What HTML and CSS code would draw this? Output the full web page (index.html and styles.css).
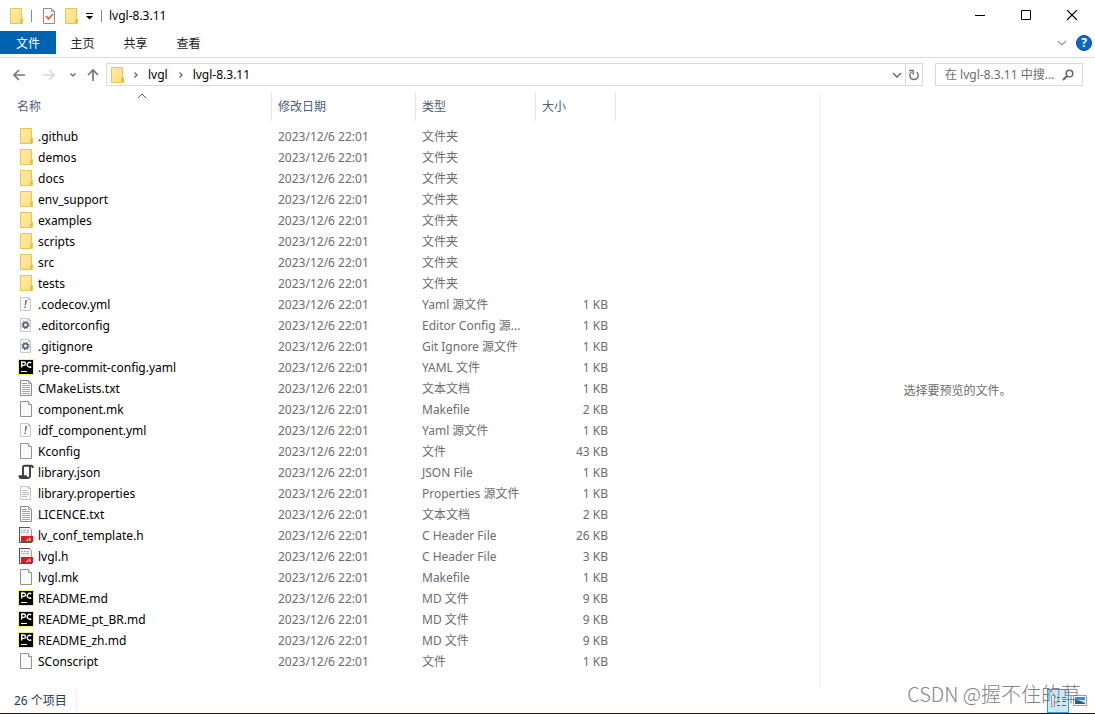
FILE: index.html
```html
<!DOCTYPE html>
<html lang="zh-CN">
<head>
<meta charset="utf-8">
<title>lvgl-8.3.11</title>
<link rel="stylesheet" href="styles.css">
</head>
<body>
<svg class="sprite" aria-hidden="true">
  <defs>
    <linearGradient id="folder-fill" x1="0" y1="0" x2="1" y2="1"><stop offset="0" stop-color="#ffeaa5"/><stop offset="1" stop-color="#ffdf80"/></linearGradient>
  </defs>
  <symbol id="folder" viewBox="0 0 16 16"><path d="M2.5.5h11v10h1v5h-12z" fill="url(#folder-fill)" stroke="#eac54f"/><path d="M12.500 15.500v-4l1-1v5" fill="#ffe69a" stroke="#e6c04a"/></symbol>
  <symbol id="blank" viewBox="0 0 16 16"><path d="M2.500.5h8l3 3v12h-11z" fill="#f9fafa" stroke="#939393"/><path d="M10.500.5v3h3" fill="#fff" stroke="#939393"/></symbol>
  <symbol id="text" viewBox="0 0 16 16"><path d="M2.500.5h8l3 3v12h-11z" fill="#fff" stroke="#8a8a8a"/><path d="M10.500.5v3h3M4 3.500h5M4 5.500h8M4 7.500h8M4 9.500h8M4 11.500h8M4 13.500h8" fill="none" stroke="#a2a2a2"/></symbol>
  <symbol id="small-page" viewBox="0 0 16 16"><path d="M2.500 1.500h8l2 2v11h-10z" fill="#fafbfd" stroke="#c5c7ca"/><path d="M10.500 1.500v2h2" fill="none" stroke="#b5b7ba"/></symbol>
  <symbol id="yaml" viewBox="0 0 16 16"><use href="#small-page"/><path d="M7.300 4h1.900L7.900 9.500H6.700zM6.400 10.500h1.500l-.3 1.500H6.100z" fill="#8a5fae"/></symbol>
  <symbol id="gear" viewBox="0 0 16 16"><use href="#small-page"/><circle cx="7.500" cy="8" r="2.300" fill="none" stroke="#566b78" stroke-width="1.700"/><circle cx="7.500" cy="8" r="3.500" fill="none" stroke="#566b78" stroke-width="1.200" stroke-dasharray="1.370 1.370"/></symbol>
  <symbol id="properties" viewBox="0 0 16 16"><use href="#small-page"/><path d="M4 5.500h5M4 7.500h7M4 9.500h7M4 11.500h5" stroke="#bbbdc0"/></symbol>
  <symbol id="pycharm" viewBox="0 0 16 16"><path d="M.5.5h15v15H.5z" fill="#000" stroke="#f7f15a"/><path d="M3.700 8.500V3h2a1.600 1.600 0 0 1 0 3.400H3.700M13.200 3.900a2.400 2.400 0 1 0 0 3.700" fill="none" stroke="#fff" stroke-width="1.400"/><path d="M3 12.500h6" stroke="#fff"/></symbol>
  <symbol id="json" viewBox="0 0 16 16"><path d="M5 12V3.500Q5 1.800 6.800 1.800H13Q14.800 1.800 14.800 4M12 2v9.500Q12 14 9.500 14H3.500Q1.500 14 1.500 12.200H8Q8 14 9.500 14" fill="none" stroke="#3d3d3d" stroke-width="1.900"/></symbol>
  <symbol id="header" viewBox="0 0 16 16"><path d="M1.500.5h10l2 2v13h-12z" fill="#f1f1f1" stroke="#a0a0a0"/><path d="M1 .5h11M1.500 0v16M1 15.500h13" stroke="#555"/><path d="M3 3.500h2M6 3.500h2M9 3.500h2M3 5.500h1M5 5.500h2M8 5.500h3" stroke="#aaa"/><path d="M3 9h12v6H3z" fill="#dc1820"/><path d="M8 13.500h2v-2M12 14v-3h-1M12 12.500h1" fill="none" stroke="#fbd0d0"/></symbol>
</svg>

<div class="window">
  <header class="titlebar">
    <svg class="icon" viewBox="0 0 16 16"><use href="#folder"/></svg>
    <span class="bar"></span>
    <svg class="icon" viewBox="0 0 16 16"><path d="M2.500.5h8l3 3v12h-11z" fill="#fbfbfb" stroke="#8d8d8d"/><path d="M10.500.5v3h3" fill="none" stroke="#999"/><path d="M5 8l2.500 3L12 6" fill="none" stroke="#ec6230" stroke-width="1.800"/></svg>
    <svg class="icon" viewBox="0 0 16 16"><use href="#folder"/></svg>
    <svg class="quick-arrow" viewBox="0 0 8 8"><path d="M1 1.500h7" stroke="#000"/><path d="M1 4h7L4.500 7.500z"/></svg>
    <span class="bar"></span>
    <h1 class="title">lvgl-8.3.11</h1>
    <div class="window-controls">
      <button aria-label="最小化"><svg viewBox="0 0 12 12"><path d="M1 5.500h10" stroke="#000"/></svg></button>
      <button aria-label="最大化"><svg viewBox="0 0 12 12"><path d="M1.500 .5h9v9h-9z" fill="none" stroke="#000"/></svg></button>
      <button aria-label="关闭"><svg viewBox="0 0 12 12"><path d="M1 0l10 10M11 0L1 10" stroke="#000" stroke-width="1.100"/></svg></button>
    </div>
  </header>

  <nav class="ribbon">
    <button class="tab tab-file">文件</button>
    <button class="tab">主页</button>
    <button class="tab">共享</button>
    <button class="tab">查看</button>
    <button class="expand" aria-label="展开功能区"><svg viewBox="0 0 10 10"><path d="M1 3l4 4 4-4" fill="none" stroke="#999" stroke-width="1.200"/></svg></button>
    <button class="help" aria-label="帮助">?</button>
  </nav>

  <div class="navigation">
    <div class="history">
      <button class="back" aria-label="返回"><svg viewBox="0 0 14 14"><path d="M13 7H2M7 2L2 7l5 5" fill="none" stroke="#777" stroke-width="1.700"/></svg></button>
      <button class="forward" aria-label="前进"><svg viewBox="0 0 14 14"><path d="M1 7h11M7 2l5 5-5 5" fill="none" stroke="#d9d9d9" stroke-width="1.700"/></svg></button>
      <button class="recent" aria-label="最近浏览的位置"><svg viewBox="0 0 8 8"><path d="M1.500 2.500L4 5l2.500-2.500" fill="none" stroke="#777" stroke-width="1.500"/></svg></button>
      <button class="up" aria-label="上移"><svg viewBox="0 0 14 14"><path d="M7 13V2M2 7l5-5 5 5" fill="none" stroke="#777" stroke-width="1.700"/></svg></button>
    </div>
    <div class="address">
      <svg class="icon" viewBox="0 0 16 16"><use href="#folder"/></svg>
      <svg class="crumb-arrow" viewBox="0 0 8 8"><path d="M2.500 1.500L5 4 2.500 6.500" fill="none" stroke="#666" stroke-width="1.300"/></svg>
      <a href="#">lvgl</a>
      <svg class="crumb-arrow" viewBox="0 0 8 8"><path d="M2.500 1.500L5 4 2.500 6.500" fill="none" stroke="#666" stroke-width="1.300"/></svg>
      <a href="#">lvgl-8.3.11</a>
      <button class="dropdown" aria-label="以前的位置"><svg viewBox="0 0 10 10"><path d="M1 3l4 4 4-4" fill="none" stroke="#777" stroke-width="1.700"/></svg></button>
      <button class="refresh" aria-label="刷新"><svg viewBox="0 0 12 12"><path d="M3.500 3A4.200 4.200 0 1 0 8.500 3" fill="none" stroke="#777" stroke-width="1.500"/><path d="M1 1.500h4.200v4" fill="none" stroke="#777" stroke-width="1.500"/></svg></button>
    </div>
    <label class="search">
      <input type="text" placeholder="在 lvgl-8.3.11 中搜..." aria-label="搜索">
      <svg viewBox="0 0 12 12"><circle cx="7.500" cy="4.500" r="3.300" fill="none" stroke="#666" stroke-width="1.500"/><path d="M5 7L1 11" stroke="#666" stroke-width="2"/></svg>
    </label>
  </div>

  <main class="content">
    <section class="files">
      <table>
        <colgroup><col class="col-name"><col class="col-date"><col class="col-type"><col class="col-size"></colgroup>
        <thead><tr>
          <th><svg class="sort" viewBox="0 0 10 6"><path d="M1 5l4-4 4 4" fill="none" stroke="#555"/></svg><span>名称</span></th>
          <th><span>修改日期</span></th><th><span>类型</span></th><th><span>大小</span></th>
        </tr></thead>
        <tbody>
          <tr><td><svg class="icon"><use href="#folder"/></svg>.github</td><td>2023/12/6 22:01</td><td>文件夹</td><td></td></tr>
          <tr><td><svg class="icon"><use href="#folder"/></svg>demos</td><td>2023/12/6 22:01</td><td>文件夹</td><td></td></tr>
          <tr><td><svg class="icon"><use href="#folder"/></svg>docs</td><td>2023/12/6 22:01</td><td>文件夹</td><td></td></tr>
          <tr><td><svg class="icon"><use href="#folder"/></svg>env_support</td><td>2023/12/6 22:01</td><td>文件夹</td><td></td></tr>
          <tr><td><svg class="icon"><use href="#folder"/></svg>examples</td><td>2023/12/6 22:01</td><td>文件夹</td><td></td></tr>
          <tr><td><svg class="icon"><use href="#folder"/></svg>scripts</td><td>2023/12/6 22:01</td><td>文件夹</td><td></td></tr>
          <tr><td><svg class="icon"><use href="#folder"/></svg>src</td><td>2023/12/6 22:01</td><td>文件夹</td><td></td></tr>
          <tr><td><svg class="icon"><use href="#folder"/></svg>tests</td><td>2023/12/6 22:01</td><td>文件夹</td><td></td></tr>
          <tr><td><svg class="icon"><use href="#yaml"/></svg>.codecov.yml</td><td>2023/12/6 22:01</td><td>Yaml 源文件</td><td>1 KB</td></tr>
          <tr><td><svg class="icon"><use href="#gear"/></svg>.editorconfig</td><td>2023/12/6 22:01</td><td>Editor Config 源...</td><td>1 KB</td></tr>
          <tr><td><svg class="icon"><use href="#gear"/></svg>.gitignore</td><td>2023/12/6 22:01</td><td>Git Ignore 源文件</td><td>1 KB</td></tr>
          <tr><td><svg class="icon"><use href="#pycharm"/></svg>.pre-commit-config.yaml</td><td>2023/12/6 22:01</td><td>YAML 文件</td><td>1 KB</td></tr>
          <tr><td><svg class="icon"><use href="#text"/></svg>CMakeLists.txt</td><td>2023/12/6 22:01</td><td>文本文档</td><td>1 KB</td></tr>
          <tr><td><svg class="icon"><use href="#blank"/></svg>component.mk</td><td>2023/12/6 22:01</td><td>Makefile</td><td>2 KB</td></tr>
          <tr><td><svg class="icon"><use href="#yaml"/></svg>idf_component.yml</td><td>2023/12/6 22:01</td><td>Yaml 源文件</td><td>1 KB</td></tr>
          <tr><td><svg class="icon"><use href="#blank"/></svg>Kconfig</td><td>2023/12/6 22:01</td><td>文件</td><td>43 KB</td></tr>
          <tr><td><svg class="icon"><use href="#json"/></svg>library.json</td><td>2023/12/6 22:01</td><td>JSON File</td><td>1 KB</td></tr>
          <tr><td><svg class="icon"><use href="#properties"/></svg>library.properties</td><td>2023/12/6 22:01</td><td>Properties 源文件</td><td>1 KB</td></tr>
          <tr><td><svg class="icon"><use href="#text"/></svg>LICENCE.txt</td><td>2023/12/6 22:01</td><td>文本文档</td><td>2 KB</td></tr>
          <tr><td><svg class="icon"><use href="#header"/></svg>lv_conf_template.h</td><td>2023/12/6 22:01</td><td>C Header File</td><td>26 KB</td></tr>
          <tr><td><svg class="icon"><use href="#header"/></svg>lvgl.h</td><td>2023/12/6 22:01</td><td>C Header File</td><td>3 KB</td></tr>
          <tr><td><svg class="icon"><use href="#blank"/></svg>lvgl.mk</td><td>2023/12/6 22:01</td><td>Makefile</td><td>1 KB</td></tr>
          <tr><td><svg class="icon"><use href="#pycharm"/></svg>README.md</td><td>2023/12/6 22:01</td><td>MD 文件</td><td>9 KB</td></tr>
          <tr><td><svg class="icon"><use href="#pycharm"/></svg>README_pt_BR.md</td><td>2023/12/6 22:01</td><td>MD 文件</td><td>9 KB</td></tr>
          <tr><td><svg class="icon"><use href="#pycharm"/></svg>README_zh.md</td><td>2023/12/6 22:01</td><td>MD 文件</td><td>9 KB</td></tr>
          <tr><td><svg class="icon"><use href="#blank"/></svg>SConscript</td><td>2023/12/6 22:01</td><td>文件</td><td>1 KB</td></tr>
        </tbody>
      </table>
    </section>
    <aside class="preview">选择要预览的文件。</aside>
  </main>

  <footer class="status">
    <span class="count">26 个项目</span>
    <div class="views">
      <button class="view view-active" aria-label="详细信息"><svg viewBox="0 0 22 22"><path d="M4.500 5.500h3v11h-3z" fill="#fff" stroke="#999"/><path d="M5.500 8h1M5.500 11h1" stroke="#357bc0"/><path d="M5.500 14h1" stroke="#d02020"/><path d="M10 7.500h3M15 7.500h4M10 11.500h3M15 11.500h4M10 15.500h3M15 15.500h4" stroke="#666"/></svg></button>
      <button class="view" aria-label="大缩略图"><svg viewBox="0 0 22 22"><path d="M4.500 5.500h13v10h-13z" fill="#fff" stroke="#999"/><path d="M6 7h10v3H6z" fill="#3e8edc"/><path d="M6 10h10v2H6z" fill="#b6dcf0"/><path d="M6 10q4 0 10 3v1H6z" fill="#2d6260"/></svg></button>
    </div>
    <span class="watermark">CSDN @握不住的草</span>
  </footer>
</div>
</body>
</html>
```
FILE: styles.css
```css
* { box-sizing: border-box; }
body {
  margin: 0;
  background: #fff;
  color: #000;
  font: 12px/20px "Noto Sans", "Noto Sans CJK SC", sans-serif;
}
button {
  display: flex;
  align-items: center;
  justify-content: center;
  margin: 0;
  padding: 0;
  border: 0;
  background: none;
  color: inherit;
  font: inherit;
}
svg { display: block; flex: none; }
.sprite { position: absolute; width: 0; height: 0; }
.icon { width: 16px; height: 16px; }
.window { display: flex; flex-direction: column; min-height: 100vh; border-bottom: 1px solid #1d1712; }

.titlebar { display: flex; align-items: center; height: 31px; padding-left: 8px; }
.titlebar .bar { width: 1px; height: 12px; margin: 0 9px 0 7px; background: #888; }
.titlebar .icon + .icon { margin-left: 6px; }
.quick-arrow { width: 8px; height: 8px; margin-left: 6px; }
.titlebar .quick-arrow + .bar { margin: 0 7px 0 8px; }
.title { margin: 0; font-size: 12px; font-weight: 400; }
.window-controls { display: flex; margin-left: auto; }
.window-controls button { width: 46px; height: 31px; }
.window-controls svg { width: 12px; height: 12px; }

.ribbon { display: flex; align-items: center; height: 27px; padding: 0 3px 3px 0; border-bottom: 1px solid #dadbdc; color: #222; }
.tab { width: 53px; height: 23px; padding-top: 2px; }
.tab-file { width: 56px; background: #0063b1; color: #fff; }
.expand { margin-left: auto; margin-right: 9px; }
.expand svg { width: 10px; height: 10px; }
.help { width: 16px; height: 16px; border: 1px solid #0a4d91; border-radius: 50%; background: #0b68c8; color: #fff; font-weight: 700; line-height: 14px; }

.navigation { display: flex; align-items: center; height: 34px; padding: 0 12px 1px 0; }
.history { display: flex; align-items: center; width: 106px; padding-left: 12px; }
.history svg { width: 14px; height: 14px; }
.forward { margin-left: 16px; }
.history .recent { margin: 0 9px 0 13px; }
.history .recent svg { width: 8px; height: 8px; }
.address { display: flex; align-items: center; flex: 1; height: 23px; padding-left: 2px; border: 1px solid #d9d9d9; }
.address a { color: #000; text-decoration: none; }
.crumb-arrow { width: 8px; height: 8px; margin: 0 8px 0 7px; }
.address a + .crumb-arrow { margin-left: 9px; }
.dropdown { width: 16px; height: 21px; margin-left: auto; }
.dropdown svg { width: 10px; height: 10px; }
.refresh { width: 17px; height: 21px; border-left: 1px solid #d9d9d9; }
.refresh svg { width: 12px; height: 12px; }
.search { display: flex; align-items: center; width: 148px; height: 23px; margin-left: 12px; padding: 0 8px 0 9px; border: 1px solid #d9d9d9; }
.search input { flex: 1; min-width: 0; padding: 0; border: 0; outline: 0; background: none; font: inherit; }
.search input::placeholder { color: #6d6d6d; opacity: 1; }
.search svg { width: 12px; height: 12px; }

.content { display: flex; flex: 1; }
.files { flex: 1; }
table { width: 616px; border-collapse: collapse; table-layout: fixed; }
.col-name { width: 272px; }
.col-date { width: 144px; }
.col-type { width: 120px; }
.col-size { width: 80px; }
th { position: relative; height: 34px; padding: 0 0 5px; color: #4c607a; font-weight: 400; text-align: left; }
th span { display: block; height: 28px; padding-left: 6px; border-right: 1px solid #e5e5e5; line-height: 28px; }
th:first-child span { padding-left: 17px; }
.sort { position: absolute; top: 1px; left: 137px; width: 10px; height: 6px; }
td { height: 21px; padding: 0 0 0 6px; color: #6d6d6d; line-height: 21px; white-space: nowrap; }
td:first-child { display: flex; align-items: center; gap: 4px; padding-left: 18px; color: #000; }
td .icon { margin-bottom: 1px; }
td:last-child { padding-right: 8px; text-align: right; }
.preview { display: flex; align-items: center; justify-content: center; width: 276px; padding-top: 2px; border-left: 1px solid #f0f0f0; color: #6d6d6d; }

.status { position: relative; display: flex; align-items: center; height: 26px; padding-left: 14px; color: #1e395b; }
.count { padding: 2px 9px 0 0; border-right: 1px solid #eee; }
.views { display: flex; align-self: flex-end; margin-left: auto; padding-right: 4px; }
.view { width: 22px; height: 24px; }
.view svg { width: 22px; height: 22px; }
.view-active { border: 1px solid #26a0da; background: #cce8f6; }
.watermark { position: absolute; right: 14px; bottom: 5px; color: #777; font: 300 20px/28px "Noto Sans CJK SC", sans-serif; opacity: .9; }
```
